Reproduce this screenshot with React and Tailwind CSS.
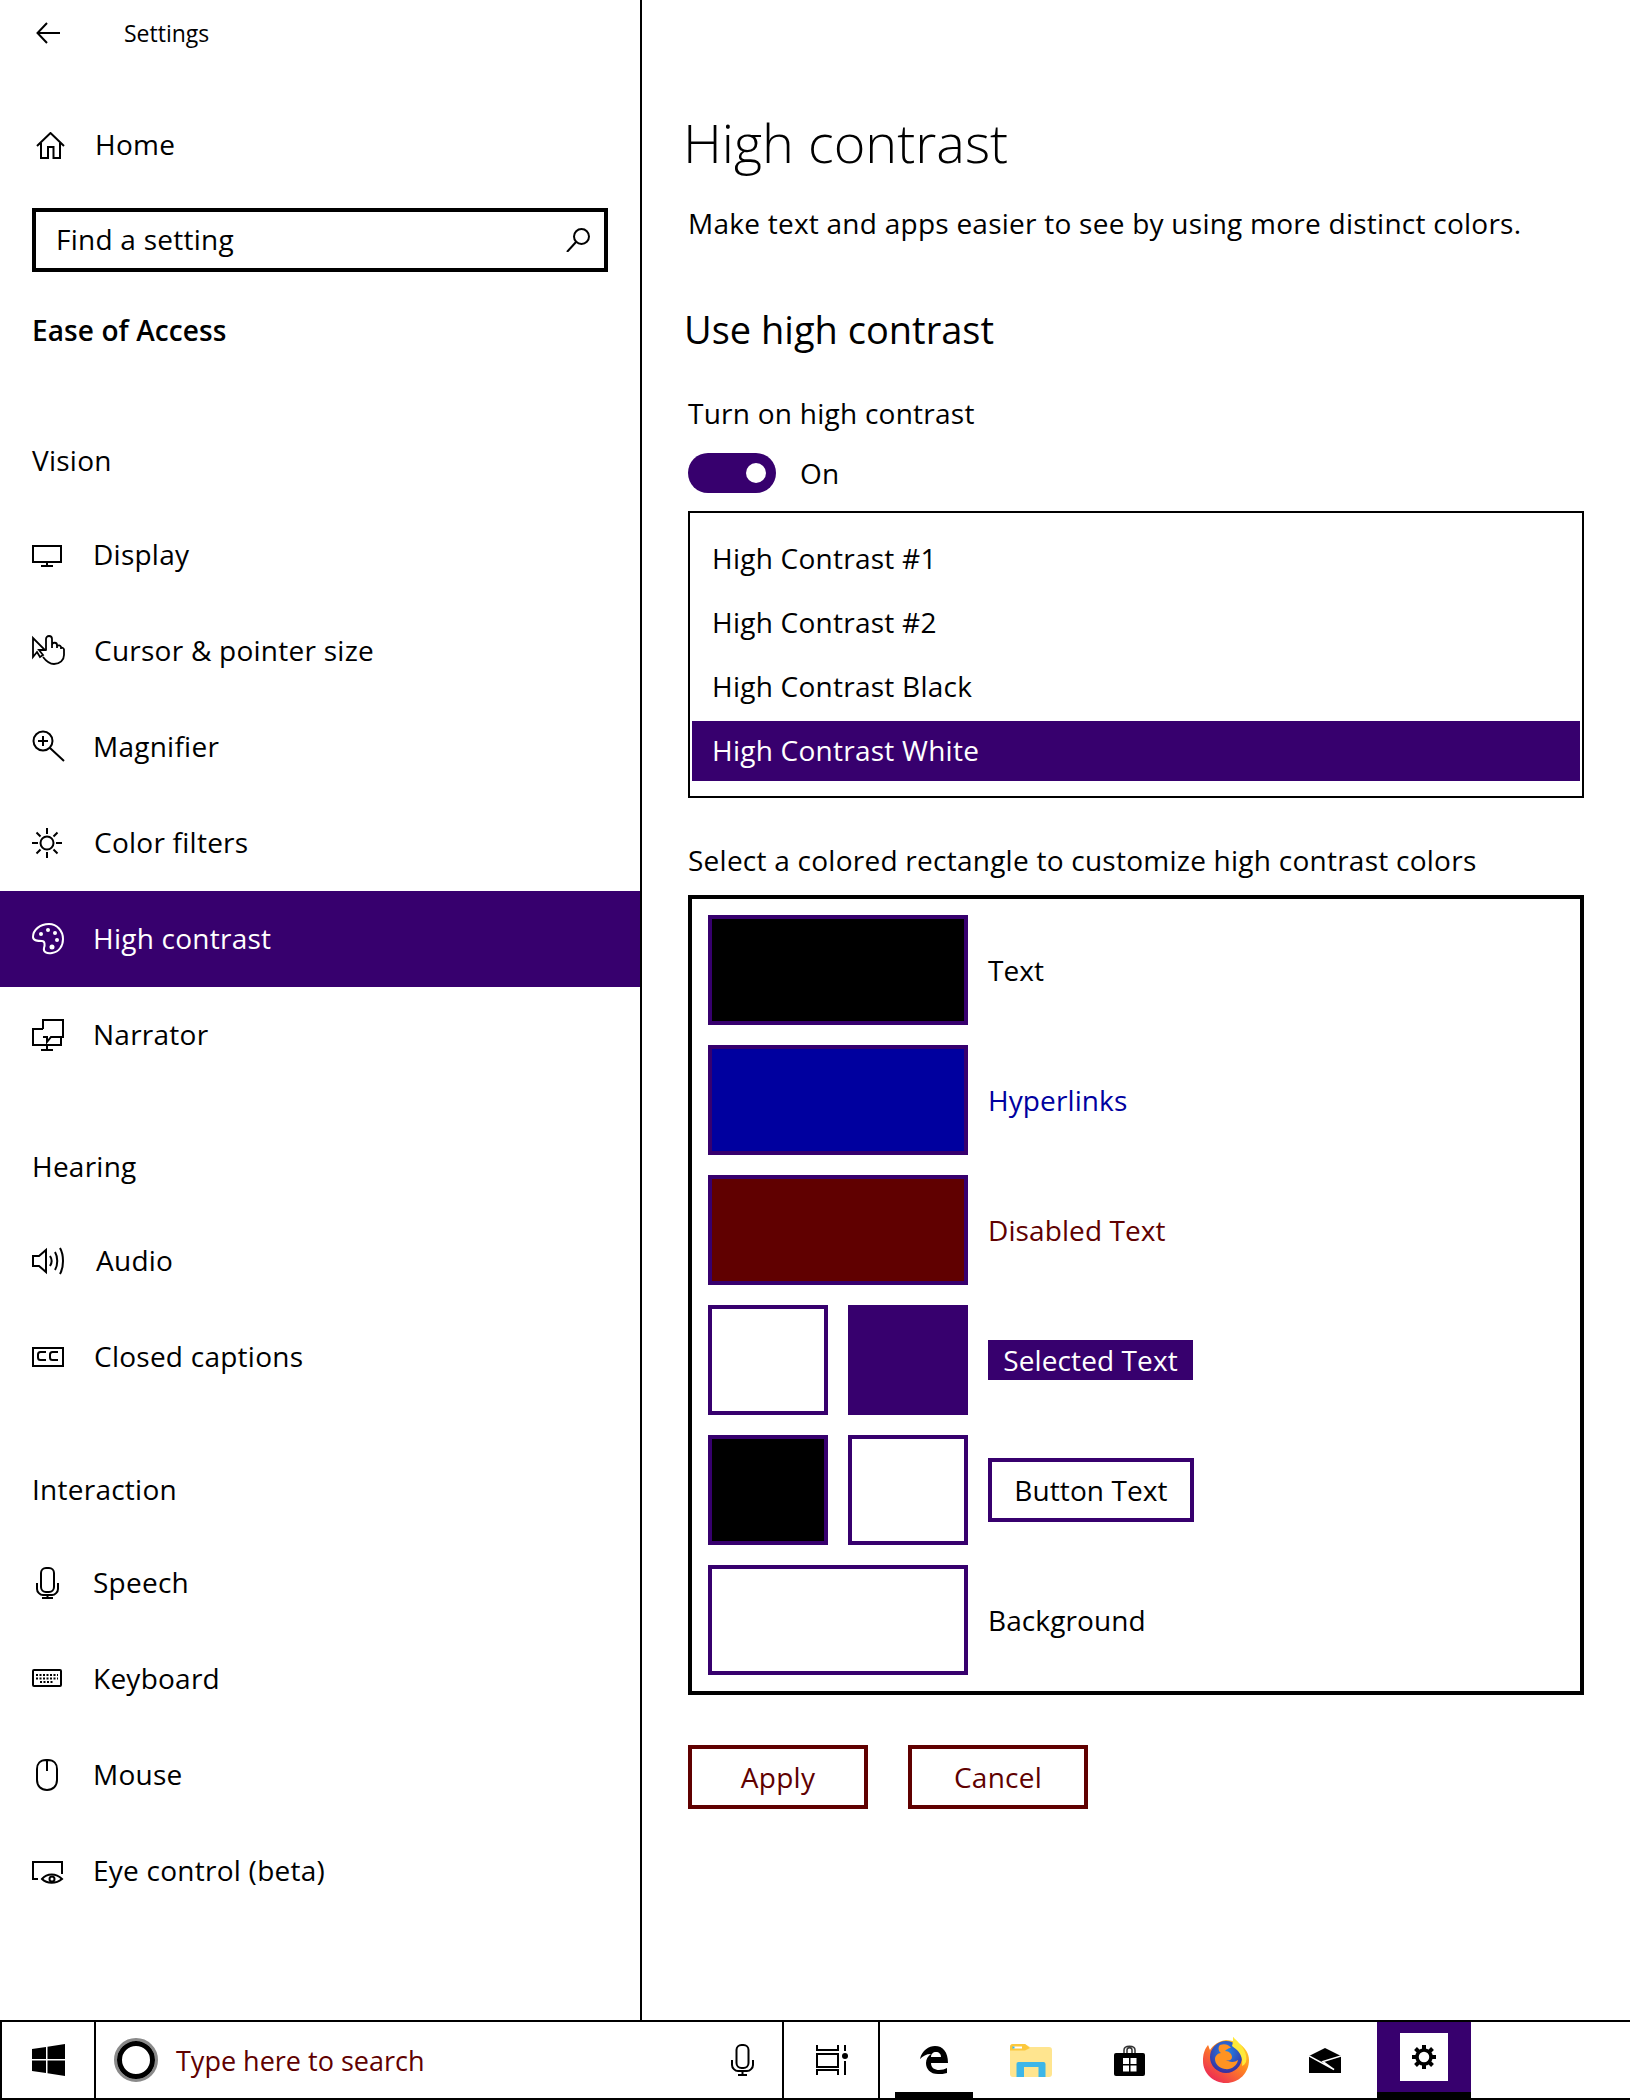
import React from "react";

const S = ({ children, w = 32, h = 32, className = "", fill = "none", stroke = "currentColor", sw = 2 }) => (
  <svg width={w} height={h} viewBox={`0 0 ${w} ${h}`} fill={fill} stroke={stroke} strokeWidth={sw} className={`shrink-0 overflow-visible ${className}`}>
    {children}
  </svg>
);

const icons = {
  display: <S><rect x="1" y="7" width="28" height="16" /><path d="M15 23v4M9 27h12" /></S>,
  cursor: (
    <S sw="1.8">
      <path d="M1 3v19l4-5 3 5 3-2-4-5h6z" />
      <path d="M14 15V4a3 3 0 0 1 6 0v9M20 10a2.500 2.500 0 0 1 5 .5V13M25 11a2.500 2.500 0 0 1 4 1v2M29 13a2 2 0 0 1 3 1.500V20c0 5-4 9-10 9-5 0-8-3-11-7" />
    </S>
  ),
  magnifier: <S><circle cx="11" cy="10" r="9.500" /><path d="M6 10h10M11 5v10M18 17l14 13" /></S>,
  color: (
    <S>
      <circle cx="15" cy="16" r="6.500" />
      <path d="M15 1v6M15 25v6M0 16h6M24 16h6M4.500 5.500l4 4M21.500 22.500l4 4M4.500 26.500l4-4M21.500 9.500l4-4" />
    </S>
  ),
  palette: (
    <S>
      <path d="M17 1C8 1 1 7 1 14c0 4 5 4 9 4 3 0 3 4 2 7-1 4 3 6 8 5 7-1 11-7 11-14C31 8 25 1 17 1z" />
      <circle cx="9" cy="11" r="2" fill="currentColor" stroke="none" />
      <circle cx="16" cy="7" r="2" fill="currentColor" stroke="none" />
      <circle cx="23" cy="10" r="2" fill="currentColor" stroke="none" />
      <circle cx="25" cy="17" r="2" fill="currentColor" stroke="none" />
      <circle cx="20" cy="24" r="2.500" fill="currentColor" stroke="none" />
    </S>
  ),
  narrator: (
    <S>
      <path d="M11 10V1h20v17H19l-4 5v-5h-4" />
      <path d="M11 10H1v16h28v-8" />
      <path d="M15 26v4M9 31h12" />
    </S>
  ),
  audio: (
    <S>
      <path d="M1 11v10h6l7 6V5l-7 6z" />
      <path d="M18 11c2 3 2 7 0 10M23 7c3 5 3 13 0 18M28 3c4 7 4 19 0 26" />
    </S>
  ),
  cc: (
    <S>
      <rect x="1" y="7" width="30" height="18" />
      <path d="M14 11H8.500C7 11 6 12 6 13.500v3C6 18 7 19 8.500 19H14M26 11h-5.500C19 11 18 12 18 13.500v3c0 1.500 1 2.500 2.500 2.500H26" />
    </S>
  ),
  speech: (
    <S>
      <rect x="9" y="1" width="13" height="24" rx="5" />
      <path d="M5 16v6c0 3 3 6 6 6h9c3 0 6-3 6-6v-6M15.500 28v3M10 31h11" />
    </S>
  ),
  keyboard: (
    <S>
      <rect x="1" y="7" width="28" height="16" rx="1" />
      <path d="M4 12h22M4 15.500h22M8 19h14" strokeDasharray="2 1.500" />
    </S>
  ),
  mouse: (
    <S>
      <path d="M15 1h-1C8 1 5 5 5 10v11c0 6 4 10 10 10s10-4 10-10V10c0-5-3-9-9-9zM15 1v11" />
    </S>
  ),
  eye: (
    <S>
      <path d="M6 24H1V7h29v12" />
      <path d="M10 24c5-6 14-6 20 0-6 5-15 5-20 0z" />
      <circle cx="20" cy="24" r="2.500" />
    </S>
  ),
};

const Row = ({ icon, label, active, ml = "ml-[29px]" }) => (
  <div className={`h-[96px] flex items-center pl-[32px] ${active ? "bg-[#37006e] text-white" : ""}`}>
    <span className="w-[32px] h-[32px]">{icon}</span>
    <span className={`${ml} pb-[2px] text-[28px] tracking-[0.25px] leading-[40px]`}>{label}</span>
  </div>
);

const Head = ({ children, className = "" }) => (
  <div className={`h-[40px] pl-[32px] text-[28px] tracking-[0.25px] leading-[38px] ${className}`}>{children}</div>
);

const Swatch = ({ bg, w = "w-[260px]" }) => (
  <div className={`${w} h-[110px] border-[4px] border-[#37006e] ${bg}`} />
);

const Windows = () => (
  <svg width="33" height="32" viewBox="0 0 33 32" fill="#000" className="shrink-0">
    <path d="M0 5l14-2v12H0zM15.500 2.700L33 0v15H15.500zM0 16.500h14v12.500L0 27zM15.500 16.500H33V32l-17.500-2.700z" />
  </svg>
);

const TaskView = () => (
  <svg width="33" height="30" viewBox="0 0 33 30" fill="none" stroke="#000" strokeWidth="2">
    <path d="M2 0v5h21V0M2 30v-5h21v5" />
    <rect x="2" y="9" width="21" height="13" />
    <path d="M30 0v6M30 16v14" />
    <circle cx="30" cy="11" r="3" fill="#000" stroke="none" />
  </svg>
);

const Edge = () => (
  <svg width="28" height="28" viewBox="0 0 28 28" fill="#000" fillRule="evenodd">
    <path d="M0 13C2 4 9 0 15 0c8 0 13 6 13 17H11c0 5 4 7 8 7 3 0 6-1 8-2v5c-3 1-6 1-9 1-8 0-12-5-12-11 0-4 2-7 5-9-5 0-8 2-11 5zM11 11h10c0-3-2-5-5-5s-5 2-5 5z" />
  </svg>
);

const Folder = () => (
  <svg width="42" height="33" viewBox="0 0 42 33">
    <path d="M0 3a3 3 0 0 1 3-3h12l5 3h19a3 3 0 0 1 3 3v24a3 3 0 0 1-3 3H3a3 3 0 0 1-3-3z" fill="#ffe58f" />
    <path d="M0 3a3 3 0 0 1 3-3h12l5 4-5 2.500H0z" fill="#fcc83c" />
    <rect x="3" y="2.500" width="9" height="2" fill="#fff" />
    <rect x="2.500" y="2.500" width="2" height="2" fill="#3db6e8" />
    <path d="M6.500 33V20a2 2 0 0 1 2-2h25a2 2 0 0 1 2 2v13h-7V23H14v10z" fill="#3db6e8" />
  </svg>
);

const Store = () => (
  <svg width="31" height="31" viewBox="0 0 31 31">
    <path d="M10 9V5c0-5 11-5 11 0v4M13 9V5c0-3 5-3 5 0v4" fill="none" stroke="#333" strokeWidth="1.500" />
    <rect x="0" y="8" width="31" height="23" rx="2" fill="#000" />
    <path d="M9 13h6v6H9zM16.500 13h6v6h-6zM9 20.500h6v6H9zM16.500 20.500h6v6h-6z" fill="#fff" />
  </svg>
);

const Firefox = () => (
  <svg width="46" height="46" viewBox="0 0 46 46">
    <defs>
      <linearGradient id="ff1" x1="0.800" y1="0.100" x2="0.200" y2="0.900">
        <stop offset="0" stopColor="#ffd02a" />
        <stop offset="0.400" stopColor="#ff8a1f" />
        <stop offset="1" stopColor="#ee2f52" />
      </linearGradient>
      <radialGradient id="ff2" cx="0.500" cy="0.350" r="0.650">
        <stop offset="0" stopColor="#1f8cf0" />
        <stop offset="1" stopColor="#3a2d9c" />
      </radialGradient>
    </defs>
    <path d="M30 0c1 3 4 5 8 8 5 4 8 9 8 15 0 13-10 23-23 23S0 36 0 24C0 18 1 13 5 8c1 2 1 3 2 5 3-5 9-9 16-10 3 0 5 1 7 1z" fill="url(#ff1)" />
    <circle cx="23" cy="20" r="16" fill="url(#ff2)" />
    <path d="M17 8c5-2 9 0 11 3-3 0-5 2-6 3 4 0 7 3 7 6 0 3-3 4-6 3 3 2 8 3 12 0-1 6-7 10-13 9-6-1-10-5-10-10 0-3 3-6 6-6-3-2-3-6-1-8z" fill="#ff9322" />
    <path d="M30 0c4 4 9 8 11 13 2 4 3 8 2 12-1 2-2 3-4 4 1-7-1-12-5-16-2-2-4-3-5-4 1-3 1-6 1-9z" fill="#ffe93a" />
  </svg>
);

const Mail = () => (
  <svg width="32" height="25" viewBox="0 0 32 25">
    <path d="M16 0l16 8v17H0V8z" fill="#000" />
    <path d="M0 8l25 13.500-11-8L32 8" fill="none" stroke="#fff" strokeWidth="1.500" />
  </svg>
);

const Gear = () => (
  <svg width="24" height="24" viewBox="0 0 24 24" fill="none" stroke="#000">
    <circle cx="12" cy="12" r="7" strokeWidth="3.500" />
    <path d="M12 0v4M12 20v4M0 12h4M20 12h4M3.500 3.500l3 3M17.500 17.500l3 3M3.500 20.500l3-3M17.500 6.500l3-3" strokeWidth="4" />
  </svg>
);

export default function App() {
  return (
    <div className="w-[1630px] h-[2100px] bg-white text-black flex flex-col overflow-hidden font-['Open_Sans','Noto_Sans',sans-serif]">
      <div className="h-[2020px] flex">
        <aside className="w-[642px] shrink-0 border-r-2 border-black">
          <div className="h-[66px] flex items-center pl-[36px]">
            <svg width="24" height="22" viewBox="0 0 24 22" fill="none" stroke="#000" strokeWidth="2"><path d="M11 1L1.500 11 11 21M2 11h22" /></svg>
            <span className="ml-[64px] text-[23px]">Settings</span>
          </div>
          <div className="mt-[31px] h-[96px] flex items-center pl-[36px]">
            <svg width="29" height="27" viewBox="0 0 29 27" fill="none" stroke="#000" strokeWidth="2"><path d="M1 14L14.500 1 28 14M5 11v15h7V15h5.500v11H24V11" /></svg>
            <span className="ml-[30px] pb-[2px] text-[28px] tracking-[0.25px]">Home</span>
          </div>
          <div className="mt-[15px] ml-[32px] w-[576px] h-[64px] border-[4px] border-black flex items-center justify-between pl-[20px] pr-[14px]">
            <span className="pb-[2px] text-[28px] tracking-[0.25px]">Find a setting</span>
            <svg width="24" height="24" viewBox="0 0 24 24" fill="none" stroke="#000" strokeWidth="2"><circle cx="15.500" cy="8.500" r="7.500" /><path d="M10 14L1 24" /></svg>
          </div>
          <div className="mt-[39px] h-[40px] pl-[32px] text-[28px] tracking-[0.1px] leading-[38px] font-semibold">Ease of Access</div>
          <Head className="mt-[90px]">Vision</Head>
          <div className="mt-[26px]">
            <Row icon={icons.display} label="Display" />
            <Row icon={icons.cursor} label="Cursor & pointer size" ml="ml-[30px]" />
            <Row icon={icons.magnifier} label="Magnifier" />
            <Row icon={icons.color} label="Color filters" ml="ml-[30px]" />
            <Row icon={icons.palette} label="High contrast" active />
            <Row icon={icons.narrator} label="Narrator" />
          </div>
          <Head className="mt-[64px]">Hearing</Head>
          <div className="mt-[26px]">
            <Row icon={icons.audio} label="Audio" ml="ml-[32px]" />
            <Row icon={icons.cc} label="Closed captions" ml="ml-[30px]" />
          </div>
          <Head className="mt-[65px]">Interaction</Head>
          <div className="mt-[25px]">
            <Row icon={icons.speech} label="Speech" />
            <Row icon={icons.keyboard} label="Keyboard" />
            <Row icon={icons.mouse} label="Mouse" />
            <Row icon={icons.eye} label="Eye control (beta)" />
          </div>
        </aside>
        <main className="flex-1 pl-[46px]">
          <h1 className="mt-[106px] -ml-[5px] h-[72px] text-[54px] leading-[72px] font-light">High contrast</h1>
          <p className="mt-[26px] h-[40px] text-[28px] tracking-[0.25px] leading-[38px]">Make text and apps easier to see by using more distinct colors.</p>
          <h2 className="mt-[59px] -ml-[4px] h-[52px] text-[38px] leading-[52px]">Use high contrast</h2>
          <p className="mt-[39px] h-[40px] text-[28px] tracking-[0.25px] leading-[38px]">Turn on high contrast</p>
          <div className="mt-[19px] h-[40px] flex items-center">
            <div className="relative w-[88px] h-[40px] rounded-full bg-[#37006e]">
              <div className="absolute left-[58px] top-[10px] w-[20px] h-[20px] rounded-full bg-white" />
            </div>
            <span className="ml-[24px] text-[28px] tracking-[0.25px] leading-[40px]">On</span>
          </div>
          <div className="mt-[18px] w-[896px] h-[287px] border-2 border-black pt-[16px] px-[2px] text-[28px] tracking-[0.25px] leading-[40px]">
            {["High Contrast #1", "High Contrast #2", "High Contrast Black"].map((t) => (
              <div key={t} className="h-[60px] mb-[4px] pl-[20px] pb-[2px] flex items-center">{t}</div>
            ))}
            <div className="h-[60px] pl-[20px] pb-[2px] flex items-center bg-[#37006e] text-white">High Contrast White</div>
          </div>
          <p className="mt-[43px] h-[40px] text-[28px] tracking-[0.25px] leading-[38px]">Select a colored rectangle to customize high contrast colors</p>
          <div className="mt-[14px] w-[896px] h-[800px] border-[4px] border-black pt-[16px] pl-[16px] flex flex-col gap-[20px] text-[28px] tracking-[0.1px] leading-[40px]">
            <div className="h-[110px] flex items-center">
              <Swatch bg="bg-black" />
              <span className="ml-[20px]">Text</span>
            </div>
            <div className="h-[110px] flex items-center text-[#00009f]">
              <Swatch bg="bg-[#00009f]" />
              <span className="ml-[20px]">Hyperlinks</span>
            </div>
            <div className="h-[110px] flex items-center text-[#600000]">
              <Swatch bg="bg-[#600000]" />
              <span className="ml-[20px]">Disabled Text</span>
            </div>
            <div className="h-[110px] flex items-center">
              <div className="flex gap-[20px]">
                <Swatch bg="bg-white" w="w-[120px]" />
                <Swatch bg="bg-[#37006e]" w="w-[120px]" />
              </div>
              <span className="ml-[20px] w-[205px] h-[40px] leading-[40px] bg-[#37006e] text-white text-center">Selected Text</span>
            </div>
            <div className="h-[110px] flex items-center">
              <div className="flex gap-[20px]">
                <Swatch bg="bg-black" w="w-[120px]" />
                <Swatch bg="bg-white" w="w-[120px]" />
              </div>
              <span className="ml-[20px] w-[206px] h-[64px] border-[4px] border-[#37006e] flex items-center justify-center">Button Text</span>
            </div>
            <div className="h-[110px] flex items-center">
              <Swatch bg="bg-white" />
              <span className="ml-[20px]">Background</span>
            </div>
          </div>
          <div className="mt-[50px] flex gap-[40px] text-[28px] tracking-[0.25px] text-[#600000]">
            <div className="w-[180px] h-[64px] border-[4px] border-[#600000] flex items-center justify-center">Apply</div>
            <div className="w-[180px] h-[64px] border-[4px] border-[#600000] flex items-center justify-center">Cancel</div>
          </div>
        </main>
      </div>
      <footer className="relative h-[80px] border-t-2 border-b-2 border-l-2 border-black flex">
        <div className="w-[94px] shrink-0 border-r-2 border-black flex items-center justify-center">
          <Windows />
        </div>
        <div className="w-[688px] shrink-0 border-r-2 border-black flex items-center pl-[18px] pr-[28px]">
          <div className="w-[44px] h-[44px] rounded-full border-[3px] border-[#8a8a8a] shrink-0">
            <div className="w-full h-full rounded-full border-[5px] border-black" />
          </div>
          <span className="ml-[18px] flex-1 pt-[2px] text-[27px] text-[#600000]">Type here to search</span>
          <svg width="23" height="32" viewBox="0 0 23 32" fill="none" stroke="#000" strokeWidth="2"><rect x="5.500" y="1" width="12" height="23" rx="5" /><path d="M1 16v5c0 3 3 6 6 6h9c3 0 6-3 6-6v-5M11.500 27v4M7 31h9" /></svg>
        </div>
        <div className="w-[96px] shrink-0 border-r-2 border-black flex items-center justify-center">
          <TaskView />
        </div>
        <div className="flex ml-[6px]">
          <div className="relative w-[96px] flex items-center justify-center"><Edge /><span className="absolute left-[9px] bottom-0 w-[78px] h-[6px] bg-black" /></div>
          <div className="w-[98px] flex items-center justify-center"><Folder /></div>
          <div className="w-[98px] flex items-center justify-center"><Store /></div>
          <div className="w-[96px] flex items-center justify-center"><Firefox /></div>
          <div className="w-[102px] flex items-center justify-center"><Mail /></div>
          <div className="relative ml-[1px] w-[94px] flex justify-center">
            <div className="w-full h-[70px] bg-[#37006e] flex items-center justify-center">
              <div className="w-[48px] h-[48px] bg-white flex items-center justify-center"><Gear /></div>
            </div>
            <span className="absolute left-0 bottom-0 w-[94px] h-[6px] bg-black" />
          </div>
        </div>
      </footer>
    </div>
  );
}
